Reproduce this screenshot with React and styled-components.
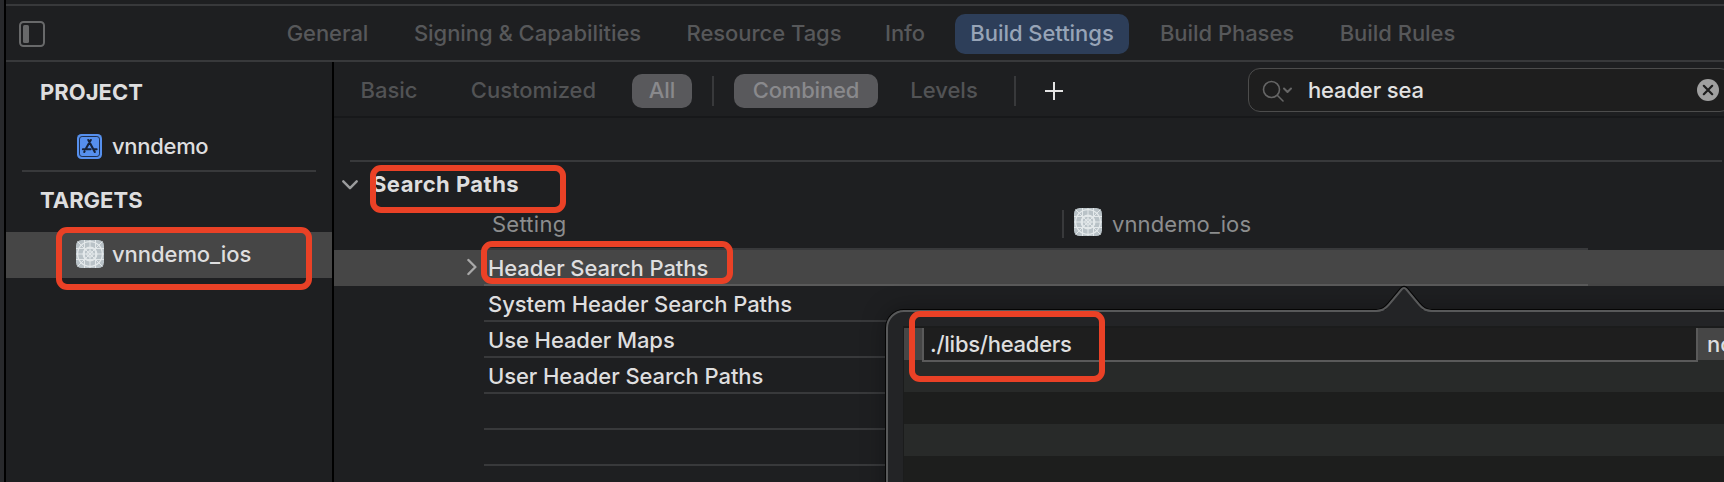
import React from "react";
import styled, { createGlobalStyle, css } from "styled-components";

const Global = createGlobalStyle`
  * { box-sizing: border-box; }
  html, body { margin: 0; background: #1e1f21; }
  body { overflow: hidden; }
`;

const Window = styled.div`
  position: relative;
  display: flex;
  width: 1724px;
  height: 482px;
  overflow: hidden;
  background: #1e1f21;
  font-family: Inter, "Liberation Sans", sans-serif;
  font-size: 22px;
  color: #dededf;
  white-space: nowrap;
`;

const Edge = styled.div`
  flex: none;
  width: 6px;
  background: #28292c;
  border-right: 2px solid #000;
`;

const Editor = styled.div`
  flex: 1;
  min-width: 0;
  display: flex;
  flex-direction: column;
  padding-top: 4px;
`;

const TabBar = styled.nav`
  flex: none;
  display: flex;
  align-items: center;
  height: 58px;
  border-top: 2px solid #38393b;
  border-bottom: 2px solid #38393b;
  padding: 2px 0 0 13px;
`;

const TabList = styled.div`
  display: flex;
  gap: 16px;
  margin-left: 228px;
  height: 40px;
`;

const Tab = styled.div`
  width: ${(p) => p.$width}px;
  height: 40px;
  line-height: 38px;
  text-align: center;
  border-radius: 10px;
  font-weight: 500;
  letter-spacing: -0.04px;
  color: ${(p) => (p.$active ? "#97a4b7" : "#57585a")};
  background: ${(p) => (p.$active ? "#2d3e59" : "transparent")};
`;

const Body = styled.div`
  flex: 1;
  display: flex;
  min-height: 0;
`;

const Sidebar = styled.aside`
  flex: none;
  width: 328px;
  border-right: 2px solid #000;
  padding-top: 8px;
`;

const Heading = styled.div`
  height: 54px;
  line-height: 44px;
  padding-left: 34px;
  font-weight: 700;
`;

const Item = styled.div`
  display: flex;
  align-items: center;
  height: 46px;
  padding: 0 0 2px ${(p) => p.$indent}px;
  gap: ${(p) => p.$gap}px;
  font-weight: 450;
  background: ${(p) => (p.$selected ? "#464646" : "transparent")};
  letter-spacing: ${(p) => p.$track || 0}px;
`;

const SideRule = styled.div`
  height: 2px;
  margin: 0 16px 6px;
  background: #38393b;
`;

const Main = styled.main`
  flex: 1;
  min-width: 0;
  display: flex;
  flex-direction: column;
`;

const FilterBar = styled.div`
  flex: none;
  display: flex;
  align-items: flex-start;
  height: 56px;
  border-bottom: 2px solid #17181a;
  padding-top: 6px;
`;

const Scope = styled.div`
  flex: none;
  width: ${(p) => p.$width}px;
  margin: 6px 0 0 ${(p) => p.$before}px;
  height: 34px;
  line-height: 32px;
  border-radius: 10px;
  text-align: center;
  font-weight: 500;
  letter-spacing: ${(p) => p.$track || 0}px;
  color: ${(p) => (p.$on ? "#89898c" : "#525355")};
  background: ${(p) => (p.$on ? "#59595c" : "transparent")};
`;

const Divider = styled.div`
  flex: none;
  width: 2px;
  height: ${(p) => p.$height}px;
  margin: ${(p) => p.$top}px 0 0 ${(p) => p.$before}px;
  background: #38393b;
`;

const PlusIcon = styled.svg`
  flex: none;
  display: block;
  margin: 13px 0 0 28px;
`;

const SearchField = styled.div`
  flex: none;
  display: flex;
  align-items: center;
  margin-left: 184px;
  width: 484px;
  height: 44px;
  padding: 0 12px 0 13px;
  border: 1px solid #4c4c4c;
  border-radius: 12px;
  background: #1e1e1e;
  font-weight: 500;
  color: #e2e2e2;
`;

const Query = styled.span`
  flex: 1;
  margin-left: 14px;
  letter-spacing: -0.15px;
`;

const SectionHead = styled.div`
  flex: none;
  display: flex;
  align-items: center;
  height: 46px;
  margin: 42px 2px 0 16px;
  border-top: 2px solid #38393b;
  font-weight: 700;
  svg { margin: 2px 0 0 -8px; }
`;

const SectionTitle = styled.span`
  margin-left: 14px;
  letter-spacing: 0.45px;
`;

const ColumnHead = styled.div`
  flex: none;
  display: flex;
  height: 44px;
  color: #8c8d8e;
`;

const ColumnName = styled.div`
  width: ${(p) => p.$width}px;
  padding-left: ${(p) => p.$pad}px;
  line-height: 36px;
  letter-spacing: ${(p) => p.$track || 0}px;
`;

const ColumnIcon = styled.div`
  margin: 2px 0 0 10px;
  height: 28px;
`;

const SettingRow = styled.div`
  flex: none;
  display: flex;
  height: 36px;
  background: ${(p) => (p.$selected ? "#464646" : "transparent")};
`;

const Disclosure = styled.div`
  width: 150px;
  flex: none;
  display: flex;
  justify-content: flex-end;
  padding: 8px 7px 0 0;
`;

const SettingName = styled.div`
  width: 1104px;
  height: 36px;
  padding-left: 4px;
  line-height: 36px;
  font-weight: 450;
  letter-spacing: -0.08px;
  border-bottom: 2px solid ${(p) => (p.$selected ? "#5a5a5a" : "#38393b")};
  ${(p) => p.$selected && css`
    box-shadow: 0 -2px 0 #38393b;
  `}
`;

const Popover = styled.div`
  position: absolute;
  left: 886px;
  top: 310px;
  width: 1000px;
  height: 220px;
  border: 2px solid #58595a;
  border-radius: 18px;
  background: #232426;
  box-shadow: 0 0 0 1px #050505, 0 0 24px rgba(0, 0, 0, 0.35);
  padding: 14px 0 0 15px;
`;

const Arrow = styled.svg`
  position: absolute;
  left: 482px;
  top: -27px;
`;

const PathTable = styled.div`
  border: 2px solid #1b1c1c;
  border-right: 0;
  border-left-width: 1px;
`;

const Stripe = styled.div`
  height: 32px;
  background: ${(p) => (p.$light ? "#282a29" : "#1d1e1d")};
`;

const PathRow = styled.div`
  display: flex;
  height: 32px;
  background: #464646;
`;

const PathField = styled.div`
  flex: none;
  position: relative;
  width: 776px;
  height: 34px;
  margin-left: 18px;
  padding-left: 6px;
  line-height: 32px;
  font-weight: 450;
  letter-spacing: -0.25px;
  background: #1e1e1e;
  border: 2px solid #5a5a5a;
  border-top: 0;
`;

const PathKind = styled.div`
  padding-left: 9px;
  line-height: 32px;
  font-weight: 450;
`;

const Highlight = styled.div`
  position: absolute;
  left: ${(p) => p.$x}px;
  top: ${(p) => p.$y}px;
  width: ${(p) => p.$w}px;
  height: ${(p) => p.$h}px;
  border: 6px solid #ea4126;
  border-radius: 11px;
`;

const SidebarToggle = () => (
  <svg width="26" height="26" viewBox="0 0 26 26">
    <rect x="1" y="1" width="24" height="24" rx="3.5" fill="none" stroke="#68696a" strokeWidth="2" />
    <rect x="4" y="4" width="6" height="18" rx="1.5" fill="#68696a" />
  </svg>
);

const ProjectIcon = () => (
  <svg width="25" height="25" viewBox="0 0 25 25">
    <rect width="25" height="25" rx="4.5" fill="#5690ee" />
    <rect x="2.5" y="2.5" width="20" height="20" rx="2.6" fill="none" stroke="#1f3050" strokeWidth="1" />
    <g stroke="#172338" strokeWidth="2.1" strokeLinecap="round" fill="none">
      <path d="M13.8 6 9 14.4M11.3 6 17.8 18M5.9 15.2H13.6M16.6 15.2H19.6M7.6 17.4 7.2 18" />
    </g>
  </svg>
);

const TargetIcon = () => (
  <svg width="28" height="28" viewBox="0 0 28 28">
    <rect width="28" height="28" rx="5.5" fill="#b9c2c7" />
    <g stroke="#e3e8ea" strokeWidth="1" fill="none">
      <path d="M8.5 0V28M14 0V28M19.5 0V28M0 8.5H28M0 14H28M0 19.5H28M1.5 1.5 26.5 26.5M26.5 1.5 1.5 26.5" />
      <circle cx="14" cy="14" r="12.4" strokeWidth="1.3" />
      <circle cx="14" cy="14" r="6.5" strokeWidth="2" />
      <circle cx="14" cy="14" r="3.2" />
    </g>
  </svg>
);

const tabs = [
  ["General", 109],
  ["Signing & Capabilities", 259],
  ["Resource Tags", 182],
  ["Info", 68],
  ["Build Settings", 174, true],
  ["Build Phases", 164],
  ["Build Rules", 145],
];

const settings = ["Header Search Paths", "System Header Search Paths", "Use Header Maps", "User Header Search Paths", "", "", ""];

export default function App() {
  return (
    <Window>
      <Global />
      <Edge />
      <Editor>
        <TabBar>
          <SidebarToggle />
          <TabList>
            {tabs.map(([name, width, active]) => (
              <Tab key={name} $width={width} $active={active}>{name}</Tab>
            ))}
          </TabList>
        </TabBar>
        <Body>
          <Sidebar>
            <Heading>PROJECT</Heading>
            <Item $indent={71} $gap={10} $track={-0.3}><ProjectIcon />vnndemo</Item>
            <SideRule />
            <Heading>TARGETS</Heading>
            <Item $indent={70} $gap={8} $track={-0.05} $selected><TargetIcon />vnndemo_ios</Item>
          </Sidebar>
          <Main>
            <FilterBar>
              <Scope $before={13} $width={84}>Basic</Scope>
              <Scope $before={26} $width={153}>Customized</Scope>
              <Scope $before={22} $width={60} $on>All</Scope>
              <Divider $before={20} $top={8} $height={30} />
              <Scope $before={20} $width={144} $track={-0.15} $on>Combined</Scope>
              <Scope $before={18} $width={96}>Levels</Scope>
              <Divider $before={22} $top={8} $height={30} />
              <PlusIcon width="20" height="20" viewBox="0 0 20 20">
                <path d="M10 1V19M1 10H19" stroke="#e4e4e4" strokeWidth="2" />
              </PlusIcon>
              <SearchField>
                <svg width="32" height="24" viewBox="0 0 32 24" fill="none" stroke="#666" strokeWidth="1.6" strokeLinecap="round">
                  <circle cx="9.5" cy="11.5" r="8" />
                  <path d="M15.5 17.5 21 23" />
                  <path d="M22 10.5 25.5 14 29 10.5" strokeWidth="2" strokeLinejoin="round" />
                </svg>
                <Query>header sea</Query>
                <svg width="22" height="22" viewBox="0 0 22 22">
                  <circle cx="11" cy="11" r="11" fill="#a0a0a0" />
                  <path d="M6.8 6.8 15.2 15.2M15.2 6.8 6.8 15.2" stroke="#1e1e1e" strokeWidth="2.2" strokeLinecap="round" />
                </svg>
              </SearchField>
            </FilterBar>
            <SectionHead>
              <svg width="16" height="10" viewBox="0 0 16 10">
                <path d="M1.3 1.3 8 8.2 14.7 1.3" fill="none" stroke="#9b9c9d" strokeWidth="2.4" strokeLinecap="round" strokeLinejoin="round" />
              </svg>
              <SectionTitle>Search Paths</SectionTitle>
            </SectionHead>
            <ColumnHead>
              <ColumnName $width={728} $pad={158} $track={0.25}>Setting</ColumnName>
              <Divider $before={0} $top={4} $height={28} />
              <ColumnIcon><TargetIcon /></ColumnIcon>
              <ColumnName $width={200} $pad={10} $track={0.1}>vnndemo_ios</ColumnName>
            </ColumnHead>
            {settings.map((name, i) => (
              <SettingRow key={i} $selected={i === 0}>
                <Disclosure>
                  {i === 0 && (
                    <svg width="10" height="18" viewBox="0 0 10 18">
                      <path d="M1.4 2 8.4 9 1.4 16" fill="none" stroke="#a8a8a8" strokeWidth="2.4" strokeLinecap="round" strokeLinejoin="round" />
                    </svg>
                  )}
                </Disclosure>
                <SettingName $selected={i === 0}>{name}</SettingName>
              </SettingRow>
            ))}
          </Main>
        </Body>
      </Editor>
      <Popover>
        <Arrow width="68" height="30" viewBox="0 0 68 30">
          <path d="M3 27C14 27 17 24 20 20.500L31.500 5Q34 1.600 36.500 5L48 20.500C51 24 54 27 65 27V30H3Z" fill="#232426" />
          <path d="M3 25C12 25 15 22 18 18.500L30.500 3.500Q34 -.5 37.500 3.500L50 18.500C53 22 56 25 65 25" fill="none" stroke="#050505" strokeWidth="1.400" />
          <path d="M3 26C13 26 16 23 19 19.500L31.500 4.500Q34 1.500 36.500 4.500L49 19.500C52 23 55 26 65 26" fill="none" stroke="#58595a" strokeWidth="2" />
        </Arrow>
        <PathTable>
          <PathRow>
            <PathField>./libs/headers</PathField>
            <PathKind>non-recursive</PathKind>
          </PathRow>
          <Stripe $light />
          <Stripe />
          <Stripe $light />
          <Stripe />
        </PathTable>
      </Popover>
      <Highlight $x={370} $y={165} $w={196} $h={48} />
      <Highlight $x={56} $y={227} $w={256} $h={63} />
      <Highlight $x={481} $y={241} $w={252} $h={43} />
      <Highlight $x={909} $y={311} $w={196} $h={71} />
    </Window>
  );
}
